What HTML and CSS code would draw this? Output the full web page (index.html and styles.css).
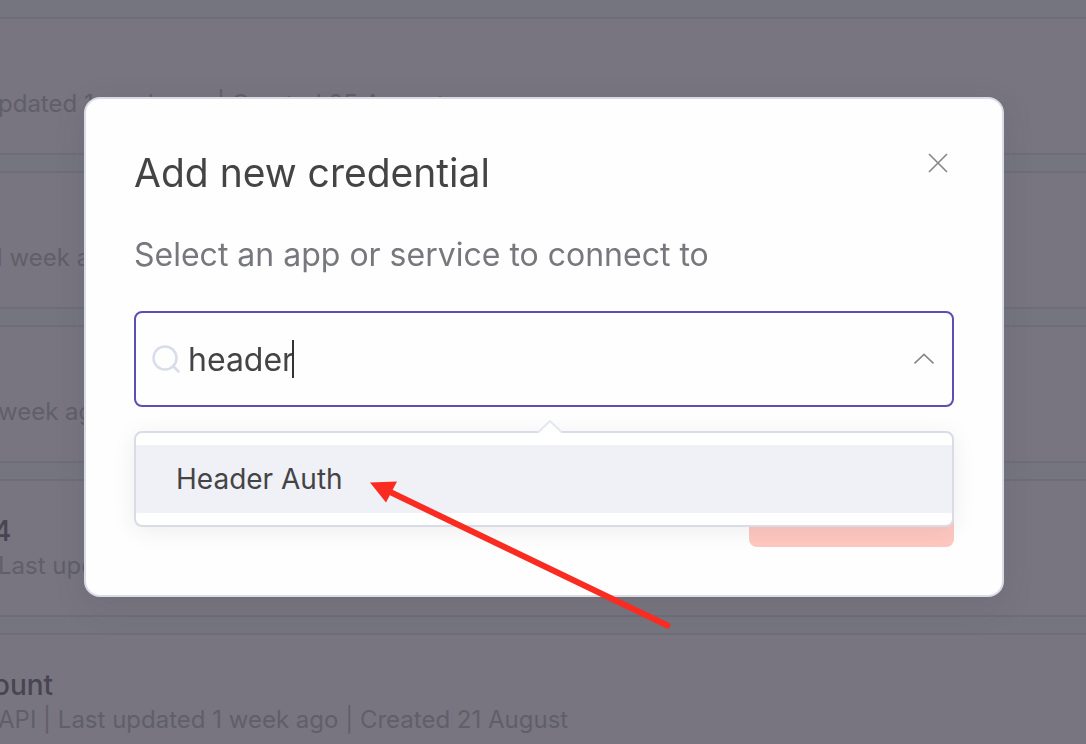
FILE: index.html
```html
<!DOCTYPE html>
<html lang="en">
  <head>
    <meta charset="UTF-8" />
    <meta name="viewport" content="width=device-width, initial-scale=1.0" />
    <title>Credentials</title>
    <link rel="stylesheet" href="styles.css">
  </head>
  <body>
    <main class="credential-list">
      <div class="credential">
        <p class="meta">pdated 1 week ago | Created 25 August</p>
      </div>
      <div class="credential">
        <p class="meta cut">1 week ago</p>
      </div>
      <div class="credential">
        <p class="meta">week ago</p>
      </div>
      <div class="credential">
        <h2 class="name cut">4</h2>
        <p class="meta">Last updated</p>
      </div>
      <div class="credential">
        <h2 class="name cut">ount</h2>
        <p class="meta">API | Last updated 1 week ago | Created 21 August</p>
      </div>
    </main>

    <div class="overlay">
      <form class="modal" role="dialog" aria-labelledby="modal-title">
        <div class="modal-header">
          <h1 id="modal-title">Add new credential</h1>
          <button type="button" class="close" aria-label="Close">
            <svg width="20" height="20" viewBox="0 0 20 20">
              <path d="M1 1 19 19M19 1 1 19" />
            </svg>
          </button>
        </div>
        <label class="subtitle" for="service">Select an app or service to connect to</label>

        <div class="select">
          <div class="field">
            <svg class="search-icon" width="28" height="28" viewBox="0 0 28 28">
              <circle cx="13" cy="13" r="11.5" />
              <path d="M21 21 26.500 26.500" />
            </svg>
            <input type="text" id="service" value="header" autocomplete="off" />
            <span class="caret"></span>
            <svg class="chevron" width="20" height="12" viewBox="0 0 20 12">
              <path d="M0.500 10.500 10 1.500 19.500 10.500" />
            </svg>
          </div>
          <div class="dropdown">
            <svg class="notch" width="26" height="13" viewBox="0 0 26 13">
              <path class="notch-fill" d="M1 13 13 1 25 13Z" />
              <path class="notch-line" d="M1 12.500 13 1 25 12.500" />
            </svg>
            <button type="button" class="option">Header Auth</button>
          </div>
        </div>

        <div class="modal-footer">
          <button type="submit" class="continue" aria-label="Continue" disabled></button>
        </div>

        <svg class="pointer" width="304" height="150" viewBox="0 0 304 150">
          <path class="pointer-line" d="M16 9 297.500 144.500" />
          <path class="pointer-head" d="M0 1.500 27 0.500 16 21.500Z" />
        </svg>
      </form>
    </div>
  </body>
</html>
```

FILE: styles.css
```css
* {
  box-sizing: border-box;
}
body {
  margin: 0;
  height: 100vh;
  overflow: hidden;
  font-family: Inter, "Liberation Sans", sans-serif;
  background-color: #75757f;
}
h1,
h2,
p {
  margin: 0;
  font-weight: 400;
}
button,
input {
  font-family: inherit;
  border: none;
  background: none;
  padding: 0;
}

/* page behind the modal */
.credential-list {
  display: flex;
  flex-direction: column;
  gap: 16px;
  padding-top: 17px;
}
.credential {
  display: flex;
  flex-direction: column;
  justify-content: flex-end;
  flex-shrink: 0;
  height: 138px;
  padding-bottom: 32px;
  border-top: 2px solid #6e6e7a;
  border-bottom: 2px solid #6e6e7a;
  background-color: #787580;
  white-space: nowrap;
}
.name {
  font-size: 28px;
  line-height: 36px;
  font-weight: 500;
  color: #474551;
}
.meta {
  font-size: 24px;
  line-height: 34px;
  text-indent: -2px;
  color: #605f69;
}
.name.cut,
.meta.cut {
  text-indent: -7px;
}

/* modal */
.overlay {
  position: fixed;
  inset: 0;
  display: flex;
  justify-content: center;
  align-items: flex-start;
  padding: 97px 82px 0 84px;
}
.modal {
  position: relative;
  width: 100%;
  max-width: 920px;
  padding: 48px;
  border: 2px solid #d9dce6;
  border-radius: 16px;
  background-color: #fefefe;
  box-shadow: 0 8px 32px rgba(60, 55, 60, 0.12);
}
.modal-header {
  display: flex;
  justify-content: space-between;
  align-items: flex-start;
}
.modal-header h1 {
  font-size: 39px;
  line-height: 52px;
  color: #444446;
}
.close {
  display: flex;
  padding: 6px;
  cursor: pointer;
}
.close svg,
.chevron {
  fill: none;
  stroke: #88888d;
  stroke-width: 1.7;
}
.subtitle {
  display: block;
  margin: 36px 0;
  font-size: 32px;
  line-height: 40px;
  color: #77787e;
}
.select {
  position: relative;
}
.field {
  display: flex;
  align-items: center;
  height: 96px;
  padding: 0 18px 0 16px;
  border: 2px solid #5b4fb5;
  border-radius: 8px;
}
.search-icon {
  margin-right: 8px;
  fill: none;
  stroke: #d9dde9;
  stroke-width: 2.5;
  stroke-linecap: round;
}
.field input {
  width: 104px;
  height: 48px;
  font-size: 32px;
  color: #444446;
  outline: none;
}
.caret {
  width: 2px;
  height: 38px;
  background-color: #333335;
}
.chevron {
  margin-left: auto;
}
.dropdown {
  position: absolute;
  top: 120px;
  left: 0;
  right: 0;
  padding: 12px 0;
  border: 2px solid #d9dce6;
  border-radius: 8px;
  background-color: #fff;
  box-shadow: 0 4px 24px rgba(0, 0, 0, 0.07);
}
.notch {
  position: absolute;
  top: -13px;
  left: calc(50% - 7px);
}
.notch-fill {
  fill: #fefefe;
}
.notch-line {
  fill: none;
  stroke: #e3e7f2;
  stroke-width: 2;
}
.option {
  display: block;
  width: 100%;
  height: 68px;
  padding: 0 40px;
  font-size: 28px;
  text-align: left;
  color: #444446;
  background-color: #f0f1f7;
  cursor: pointer;
}
.modal-footer {
  display: flex;
  justify-content: flex-end;
  margin-top: 60px;
}
.continue {
  width: 25%;
  height: 80px;
  border-radius: 8px;
  background-color: #fec8c1;
}

/* red arrow */
.pointer {
  position: absolute;
  top: 382px;
  left: 284px;
  pointer-events: none;
}
.pointer-line {
  fill: none;
  stroke: #fa2c22;
  stroke-width: 6;
  stroke-linecap: round;
}
.pointer-head {
  fill: #fa2c22;
}
```
